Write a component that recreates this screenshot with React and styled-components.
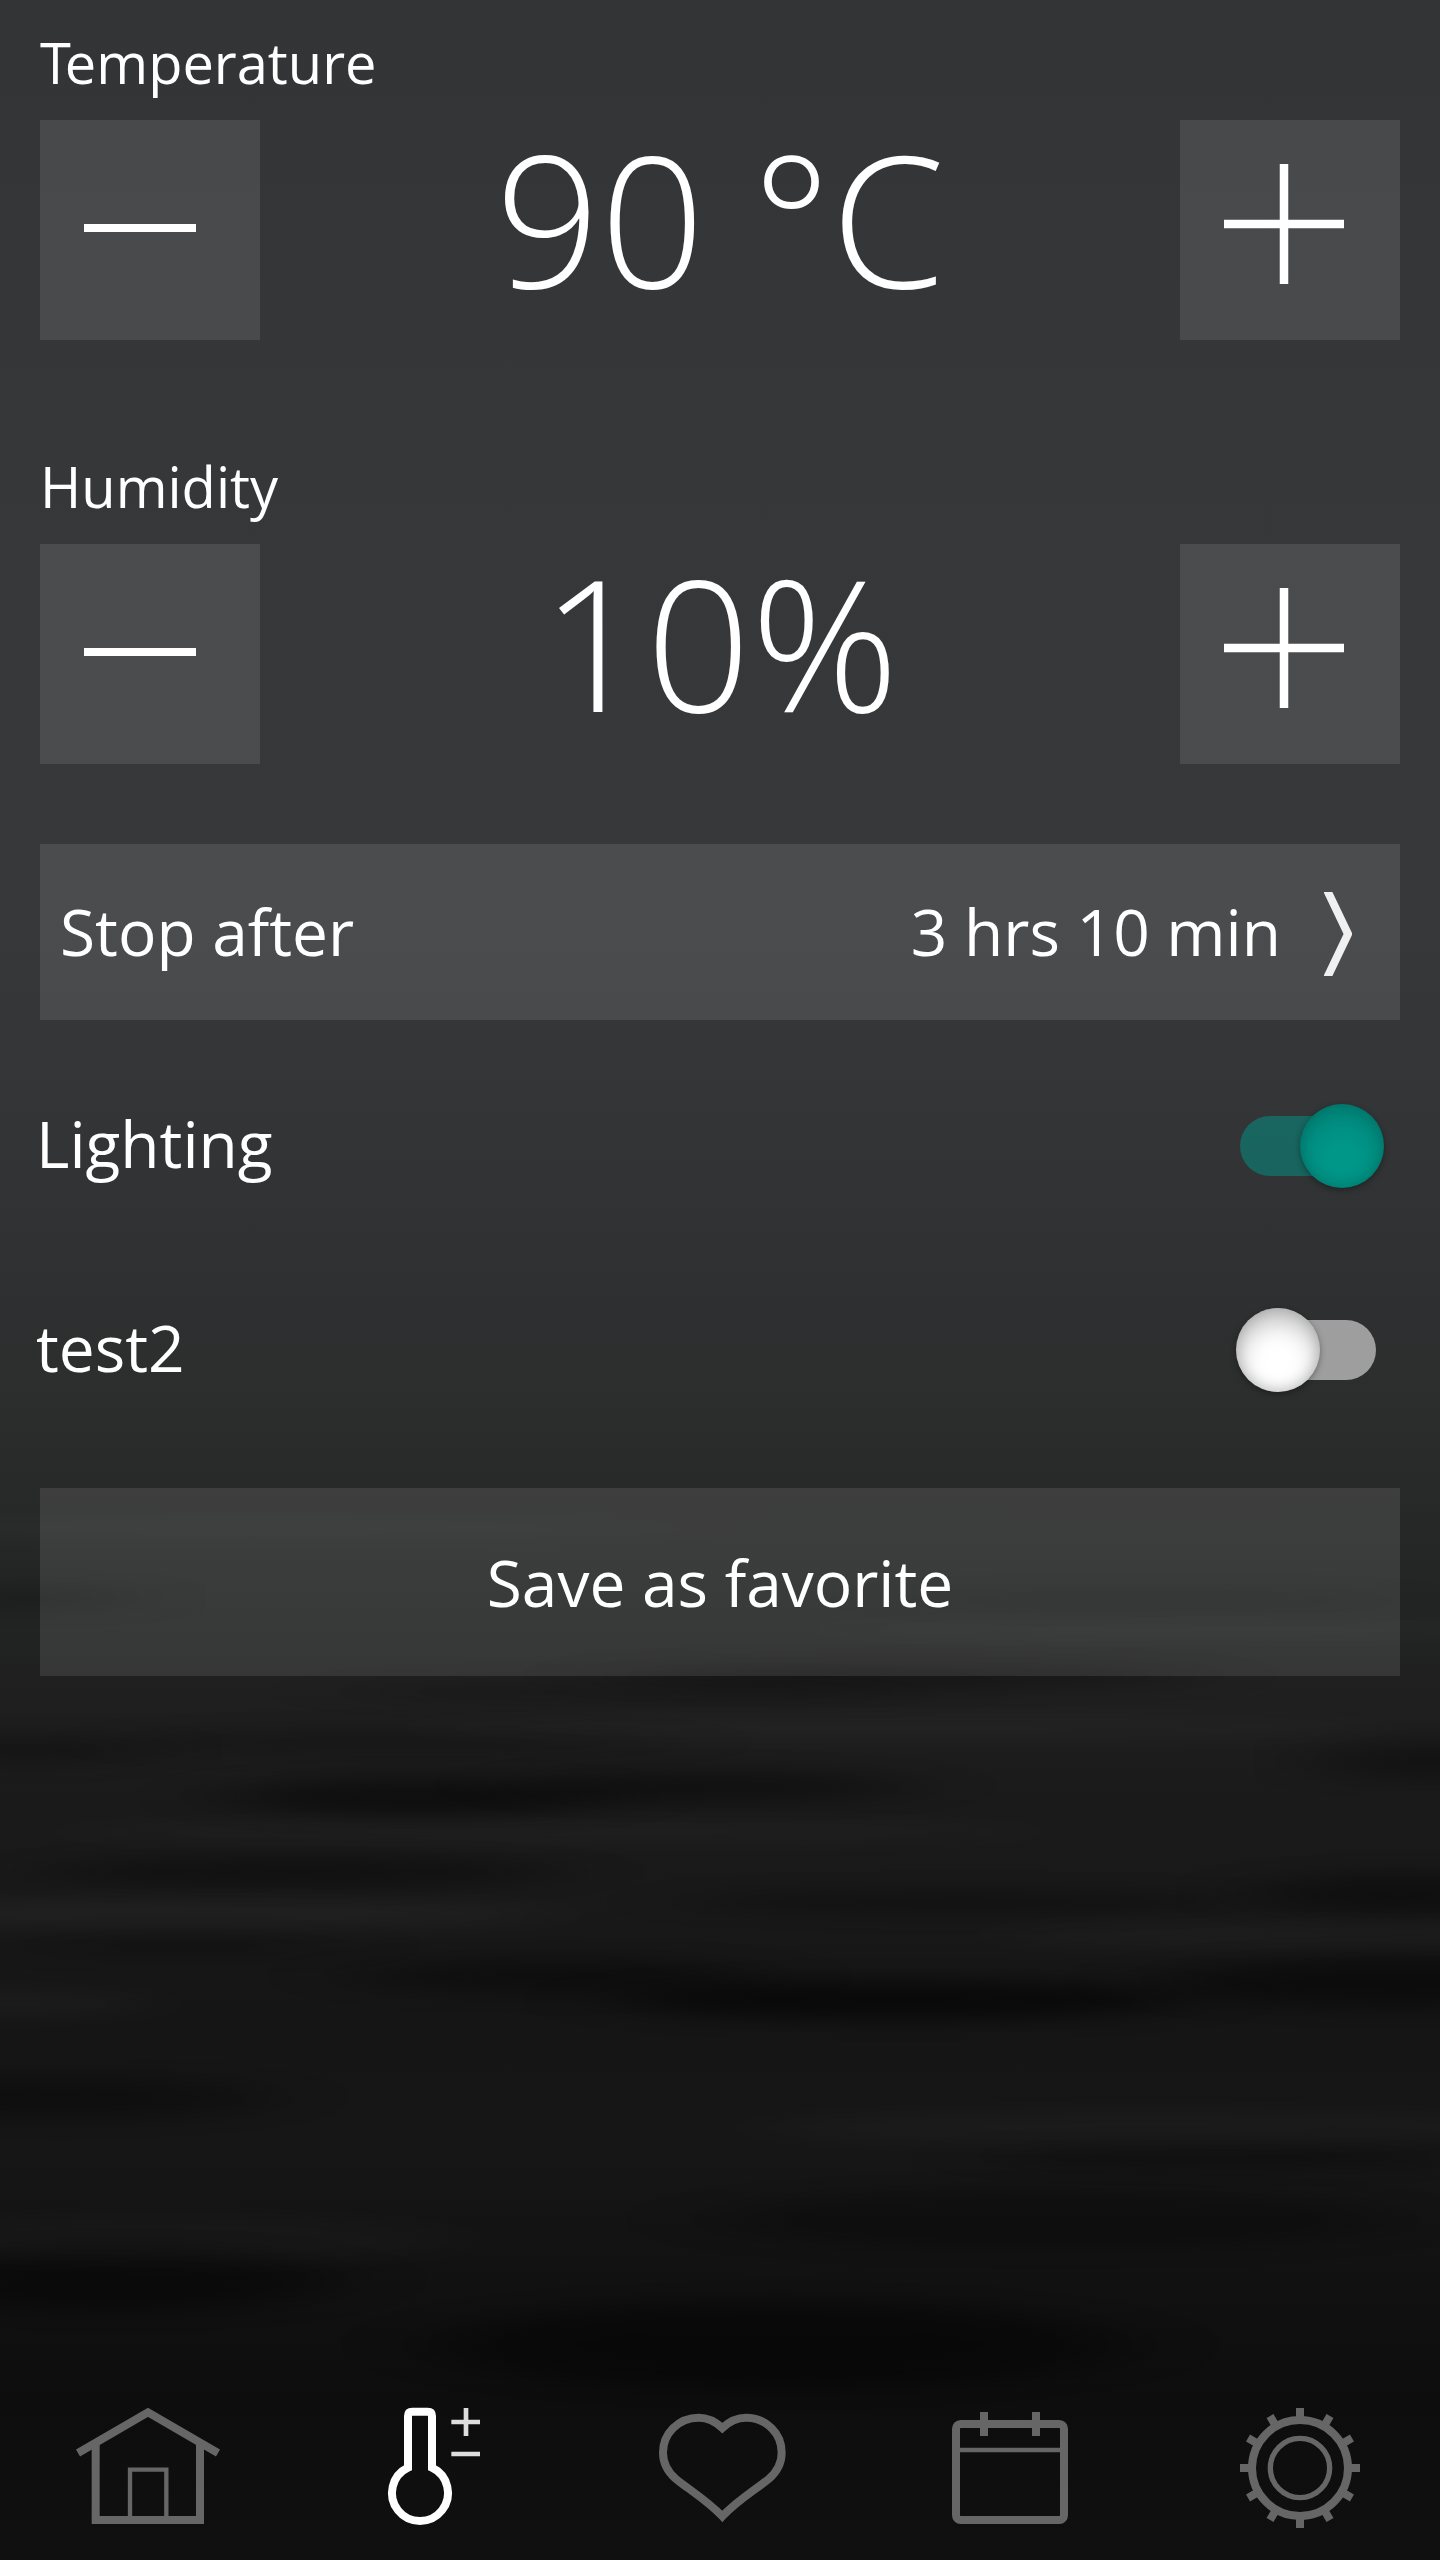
import React, { useState } from 'react';
import styled, { createGlobalStyle, css, ThemeProvider } from 'styled-components';

const theme = {
  white: '#fff',
  muted: '#666',
  accent: '#009688',
  panel: 'rgba(255, 255, 255, 0.1)',
  fontSize: {
    label: '56px',
    body: '64px',
    value: '183.5px',
  },
};

const GlobalStyle = createGlobalStyle`
  *, *::before, *::after {
    box-sizing: border-box;
  }

  body {
    margin: 0;
    font-family: 'Open Sans', 'Noto Sans', sans-serif;
    color: #fff;
    background: #0e0e0e;
  }

  button {
    border: none;
    padding: 0;
    color: inherit;
    font-family: inherit;
  }
`;

const StyledWrapper = styled.div`
  position: relative;
  width: 1440px;
  height: 2560px;
  overflow: hidden;
  display: flex;
  flex-direction: column;
  background: linear-gradient(
    #333436 0px,
    #363739 430px,
    #373839 900px,
    #343537 1100px,
    #303132 1250px,
    #2c2d2d 1400px,
    #282929 1480px,
    #232424 1600px,
    #1f1f1f 1700px,
    #1a1a1a 1800px,
    #191919 1900px,
    #151515 2010px,
    #161616 2150px,
    #111111 2290px,
    #0d0d0d 2400px,
    #101010 2560px
  );
`;

const StyledWaves = styled.svg`
  position: absolute;
  left: 0;
  top: 0;
  width: 1440px;
  height: 2560px;
`;

const Content = styled.main`
  position: relative;
  flex: 1;
  padding: 0 40px;
`;

const StyledSetting = styled.section`
  height: 424px;

  &:nth-of-type(2) {
    height: 420px;
  }
`;

const Label = styled.h2`
  margin: 0;
  height: 120px;
  padding-top: 20px;
  font-size: ${({ theme }) => theme.fontSize.label};
  font-weight: 400;
  line-height: 84px;

  ${({ $tight }) =>
    $tight &&
    css`
      &::first-letter {
        letter-spacing: -6px;
      }
    `}
`;

const Stepper = styled.div`
  display: flex;
  justify-content: space-between;
  height: 220px;
`;

const StepButton = styled.button`
  width: 220px;
  height: 220px;
  background: ${({ theme }) => theme.panel};

  svg {
    display: block;
  }
`;

const Value = styled.div`
  font-size: ${({ theme }) => theme.fontSize.value};
  font-weight: 300;
  line-height: 194px;
  white-space: pre;
`;

const bar = css`
  display: flex;
  align-items: center;
  width: 100%;
  background: ${({ theme }) => theme.panel};
  font-size: ${({ theme }) => theme.fontSize.body};
`;

const StopAfter = styled.button`
  ${bar}
  height: 176px;
  margin-bottom: 24px;
  padding: 0 48px 2px 20px;
  justify-content: space-between;
`;

const StopValue = styled.span`
  display: flex;
  align-items: center;
  gap: 43px;

  svg {
    margin-top: 6px;
  }
`;

const SaveButton = styled.button`
  ${bar}
  height: 188px;
  margin-top: 36px;
  padding-top: 1px;
  justify-content: center;
`;

const SwitchRow = styled.div`
  display: flex;
  align-items: center;
  justify-content: space-between;
  height: 204px;
  margin-left: -4px;
  padding-right: 24px;
  font-size: ${({ theme }) => theme.fontSize.body};
`;

const SwitchLabel = styled.span`
  padding-bottom: 6px;
`;

const Track = styled.button`
  position: relative;
  width: 136px;
  height: 60px;
  border-radius: 30px;
  background: ${({ $on }) => ($on ? 'rgba(0, 150, 136, 0.5)' : '#9e9e9e')};
`;

const Thumb = styled.span`
  position: absolute;
  top: -12px;
  left: ${({ $on }) => ($on ? '60px' : '-4px')};
  width: 84px;
  height: 84px;
  border-radius: 50%;
  background: ${({ $on, theme }) => ($on ? theme.accent : theme.white)};
  box-shadow: 0 2px 6px rgba(0, 0, 0, 0.35),
    inset 0 -2px 14px rgba(0, 0, 0, ${({ $on }) => ($on ? 0.15 : 0.18)}),
    inset 0 12px 26px rgba(0, 0, 0, ${({ $on }) => ($on ? 0.18 : 0.28)});
`;

const StyledNav = styled.nav`
  position: relative;
  display: grid;
  grid-template-columns: repeat(5, 1fr);
  height: 180px;
`;

const NavLink = styled.a`
  display: flex;
  justify-content: center;
  color: ${({ $active, theme }) => ($active ? theme.white : theme.muted)};
`;

const NavSvg = styled.svg`
  width: 200px;
  height: 180px;
  fill: none;
  stroke: currentColor;
  stroke-width: 24px;
`;

const ThinPath = styled.path`
  stroke-width: 13px;
`;

const SignPath = styled.path`
  stroke: #ddd;
  stroke-width: 14px;
`;

const ThinCircle = styled.circle`
  stroke-width: 16px;
`;

// soft ripples of the water: [cx, cy, rx, ry, opacity]
const DARK_WAVES = [
  [420, 1797, 190, 20, 0.42],
  [716, 1786, 190, 16, 0.35],
  [900, 1676, 300, 12, 0.3],
  [640, 1692, 300, 12, 0.18],
  [400, 1742, 280, 14, 0.18],
  [300, 1872, 260, 15, 0.32],
  [964, 1902, 280, 12, 0.28],
  [1400, 1894, 140, 22, 0.38],
  [560, 1976, 200, 18, 0.35],
  [900, 2000, 280, 20, 0.55],
  [1400, 1982, 240, 26, 0.42],
  [1430, 1761, 110, 20, 0.32],
  [184, 1946, 160, 9, 0.25],
  [30, 1750, 120, 14, 0.25],
  [60, 2098, 200, 22, 0.3],
  [1221, 2156, 230, 11, 0.3],
  [119, 2280, 210, 32, 0.4],
  [1056, 2220, 340, 30, 0.25],
  [780, 2345, 340, 45, 0.4],
  [30, 1598, 110, 12, 0.2],
  [1150, 1600, 260, 10, 0.12],
];

const LIGHT_WAVES = [
  [550, 1832, 500, 12, 0.02],
  [180, 1914, 380, 14, 0.03],
  [0, 2004, 150, 12, 0.03],
  [1150, 2128, 400, 18, 0.02],
  [1290, 1935, 300, 14, 0.02],
  [900, 1728, 500, 12, 0.018],
  [260, 1528, 500, 10, 0.02],
  [1200, 1630, 400, 9, 0.02],
  [160, 2240, 300, 26, 0.015],
];

const Waves = () => (
  <StyledWaves viewBox="0 0 1440 2560" aria-hidden="true">
    <defs>
      <filter
        id="soft"
        x="-30%"
        y="-150%"
        width="160%"
        height="400%"
        colorInterpolationFilters="sRGB"
      >
        <feGaussianBlur stdDeviation="50 10" />
      </filter>
    </defs>
    {DARK_WAVES.map(([cx, cy, rx, ry, opacity]) => (
      <ellipse key={`${cx}-${cy}`} cx={cx} cy={cy} rx={rx} ry={ry} opacity={opacity} filter="url(#soft)" />
    ))}
    {LIGHT_WAVES.map(([cx, cy, rx, ry, opacity]) => (
      <ellipse
        key={`${cx}-${cy}`}
        cx={cx}
        cy={cy}
        rx={rx}
        ry={ry}
        fill="#fff"
        opacity={opacity}
        filter="url(#soft)"
      />
    ))}
  </StyledWaves>
);

const MinusIcon = () => (
  <svg width="220" height="220">
    <path d="M44 108h112" stroke="#fff" strokeWidth="8" />
  </svg>
);

const PlusIcon = () => (
  <svg width="220" height="220">
    <path d="M44 104h120M104 44v120" stroke="#fff" strokeWidth="8.5" />
  </svg>
);

const ChevronIcon = () => (
  <svg width="28" height="84" viewBox="0 0 28 84">
    <path d="M3 -2L24 42L3 86" fill="none" stroke="#f0f0f0" strokeWidth="8" />
  </svg>
);

const HomeIcon = () => (
  <NavSvg viewBox="-18 0 600 540">
    <path d="M84 219L294 97L504 219" />
    <path d="M137 190V420H450V190" />
    <ThinPath d="M240 408V269H349V408" />
  </NavSvg>
);

const ThermometerIcon = () => (
  <NavSvg viewBox="-54 0 600 540">
    <path d="M174 263V108Q174 95 187 95H233Q246 95 246 108V263A84 84 0 1 1 174 263Z" />
    <SignPath d="M304 126H390M348 84V168M304 222H390" />
  </NavSvg>
);

const HeartIcon = () => (
  <NavSvg viewBox="-30 0 600 540">
    <path d="M277 144C254 122 232 113 206 113C146 113 99 160 99 218C99 250 113 275 137 296C167 322 228 358 277 409C325 358 387 322 417 296C441 275 455 250 455 218C455 160 408 113 348 113C322 113 300 122 277 144Z" />
  </NavSvg>
);

const CalendarIcon = () => (
  <NavSvg viewBox="-36 0 600 540">
    <rect x="108" y="132" width="324" height="288" rx="14" />
    <path d="M192 96V168M348 96V168" />
    <ThinPath d="M120 210H420" />
  </NavSvg>
);

const TEETH = [...Array(12).keys()].map((i) => i * 30);

const GearIcon = () => (
  <NavSvg viewBox="-12 0 600 540">
    <circle cx="300" cy="264" r="144" />
    <ThinCircle cx="300" cy="264" r="89" />
    {TEETH.map((angle) => (
      <path key={angle} d="M300 112V84" transform={`rotate(${angle} 300 264)`} />
    ))}
  </NavSvg>
);

const NAV_ITEMS = [
  { id: 'home', Icon: HomeIcon },
  { id: 'climate', Icon: ThermometerIcon },
  { id: 'favorites', Icon: HeartIcon },
  { id: 'calendar', Icon: CalendarIcon },
  { id: 'settings', Icon: GearIcon },
];

const Setting = ({ label, value, unit, step, onChange }) => (
  <StyledSetting>
    <Label $tight={label.startsWith('T')}>{label}</Label>
    <Stepper>
      <StepButton onClick={() => onChange(value - step)}>
        <MinusIcon />
      </StepButton>
      <Value>
        {value}
        {unit}
      </Value>
      <StepButton onClick={() => onChange(value + step)}>
        <PlusIcon />
      </StepButton>
    </Stepper>
  </StyledSetting>
);

const Switch = ({ label, on, onToggle }) => (
  <SwitchRow>
    <SwitchLabel>{label}</SwitchLabel>
    <Track $on={on} onClick={onToggle}>
      <Thumb $on={on} />
    </Track>
  </SwitchRow>
);

const App = () => {
  const [temperature, setTemperature] = useState(90);
  const [humidity, setHumidity] = useState(10);
  const [lighting, setLighting] = useState(true);
  const [test2, setTest2] = useState(false);

  return (
    <ThemeProvider theme={theme}>
      <GlobalStyle />
      <StyledWrapper>
        <Waves />
        <Content>
          <Setting label="Temperature" value={temperature} unit=" °C" step={1} onChange={setTemperature} />
          <Setting label="Humidity" value={humidity} unit="%" step={1} onChange={setHumidity} />
          <StopAfter>
            <span>Stop after</span>
            <StopValue>
              3 hrs 10 min
              <ChevronIcon />
            </StopValue>
          </StopAfter>
          <Switch label="Lighting" on={lighting} onToggle={() => setLighting(!lighting)} />
          <Switch label="test2" on={test2} onToggle={() => setTest2(!test2)} />
          <SaveButton>Save as favorite</SaveButton>
        </Content>
        <StyledNav>
          {NAV_ITEMS.map(({ id, Icon }) => (
            <NavLink key={id} $active={id === 'climate'}>
              <Icon />
            </NavLink>
          ))}
        </StyledNav>
      </StyledWrapper>
    </ThemeProvider>
  );
};

export default App;
